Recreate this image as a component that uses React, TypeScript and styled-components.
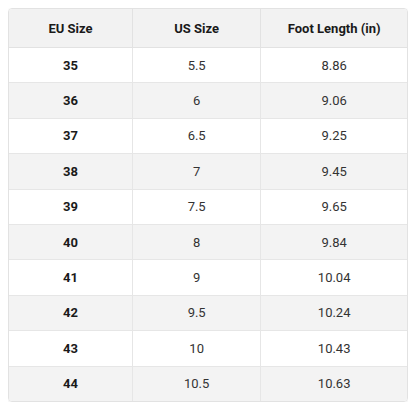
import styled, { createGlobalStyle } from "styled-components";

const GlobalStyle = createGlobalStyle`
  body {
    margin: 8px;
    background: #ffffff;
    font-family: Roboto, "Liberation Sans", sans-serif;
  }
`;

const Wrapper = styled.div`
  border: 1px solid #e2e2e2;
  border-radius: 4px;
  overflow: hidden;
  box-shadow: 0 1px 3px rgba(0, 0, 0, 0.08);
`;

const Table = styled.table`
  width: 100%;
  border-collapse: collapse;
  font-size: 13px;
  color: #222;
`;

const HeadCell = styled.th<{ $w: number }>`
  width: ${(p) => p.$w}px;
  height: 38px;
  padding: 0 8px;
  background: #f2f2f2;
  font-weight: 700;
  color: #1a1a1a;
  text-align: center;
  border-bottom: 1px solid #e2e2e2;
  border-left: 1px solid #e2e2e2;

  &:first-child {
    border-left: none;
  }
`;

const Row = styled.tr<{ $striped: boolean }>`
  background: ${(p) => (p.$striped ? "#f3f3f3" : "#ffffff")};
`;

const Cell = styled.td<{ $bold?: boolean }>`
  height: 34.4px;
  padding: 0 8px;
  text-align: center;
  font-weight: ${(p) => (p.$bold ? 700 : 400)};
  color: ${(p) => (p.$bold ? "#1a1a1a" : "#333")};
  border-top: 1px solid #e6e6e6;
  border-left: 1px solid #e6e6e6;

  &:first-child {
    border-left: none;
  }
`;

const sizes = [
  ["35", "5.5", "8.86"],
  ["36", "6", "9.06"],
  ["37", "6.5", "9.25"],
  ["38", "7", "9.45"],
  ["39", "7.5", "9.65"],
  ["40", "8", "9.84"],
  ["41", "9", "10.04"],
  ["42", "9.5", "10.24"],
  ["43", "10", "10.43"],
  ["44", "10.5", "10.63"],
];

const App = () => {
  return (
    <>
      <GlobalStyle />
      <Wrapper>
        <Table>
          <thead>
            <tr>
              <HeadCell $w={123}>EU Size</HeadCell>
              <HeadCell $w={128}>US Size</HeadCell>
              <HeadCell $w={147}>Foot Length (in)</HeadCell>
            </tr>
          </thead>
          <tbody>
            {sizes.map(([eu, us, foot], i) => (
              <Row key={eu} $striped={i % 2 === 1}>
                <Cell $bold>{eu}</Cell>
                <Cell>{us}</Cell>
                <Cell>{foot}</Cell>
              </Row>
            ))}
          </tbody>
        </Table>
      </Wrapper>
    </>
  );
};

export default App;
